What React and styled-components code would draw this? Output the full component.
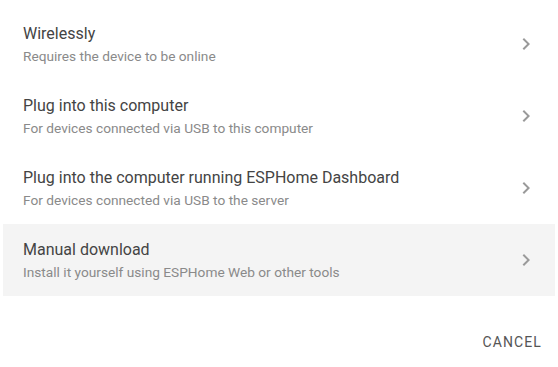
import React from "react";
import styled, { createGlobalStyle } from "styled-components";

const GlobalStyle = createGlobalStyle`
  html, body {
    margin: 0;
    padding: 0;
    background: #ffffff;
  }
  body {
    font-family: Roboto, "Noto Sans", sans-serif;
  }
`;

const Dialog = styled.div`
  width: 558px;
  height: 367px;
  display: flex;
  flex-direction: column;
  box-sizing: border-box;
`;

const List = styled.ul`
  list-style: none;
  margin: 0 3px;
  padding: 8px 0;
`;

const Item = styled.li`
  display: flex;
  align-items: center;
  height: 72px;
  padding: 0 17px 0 20px;
  background: ${(p) => (p.active ? "#f4f4f4" : "transparent")};
  cursor: pointer;
`;

const Text = styled.div`
  flex: 1;
  display: flex;
  flex-direction: column;
  min-width: 0;
`;

const Title = styled.span`
  font-size: 16px;
  line-height: 24px;
  color: #444444;
  white-space: nowrap;
`;

const Secondary = styled.span`
  font-size: 13.7px;
  line-height: 20px;
  color: #8a8a8a;
  white-space: nowrap;
`;

const Meta = styled.svg`
  width: 24px;
  height: 24px;
  flex: none;
  fill: #9a9a9a;
`;

const Actions = styled.div`
  display: flex;
  justify-content: flex-end;
  padding: 20px 8px 0;
`;

const Button = styled.button`
  border: none;
  background: none;
  height: 36px;
  min-width: 64px;
  padding: 0 8px;
  font-family: Roboto, "Noto Sans", sans-serif;
  font-size: 14px;
  font-weight: 400;
  letter-spacing: 1.1px;
  text-transform: uppercase;
  color: #555555;
  cursor: pointer;
`;

const Chevron = () => (
  <Meta viewBox="0 0 24 24">
    <path d="M8.59,16.58L13.17,12L8.59,7.41L10,6L16,12L10,18L8.59,16.58Z" />
  </Meta>
);

const options = [
  { title: "Wirelessly", desc: "Requires the device to be online" },
  { title: "Plug into this computer", desc: "For devices connected via USB to this computer" },
  { title: "Plug into the computer running ESPHome Dashboard", desc: "For devices connected via USB to the server" },
  { title: "Manual download", desc: "Install it yourself using ESPHome Web or other tools", active: true },
];

export default function App() {
  return (
    <>
      <GlobalStyle />
      <Dialog>
        <List>
          {options.map((o) => (
            <Item key={o.title} active={o.active}>
              <Text>
                <Title>{o.title}</Title>
                <Secondary>{o.desc}</Secondary>
              </Text>
              <Chevron />
            </Item>
          ))}
        </List>
        <Actions>
          <Button>Cancel</Button>
        </Actions>
      </Dialog>
    </>
  );
}
